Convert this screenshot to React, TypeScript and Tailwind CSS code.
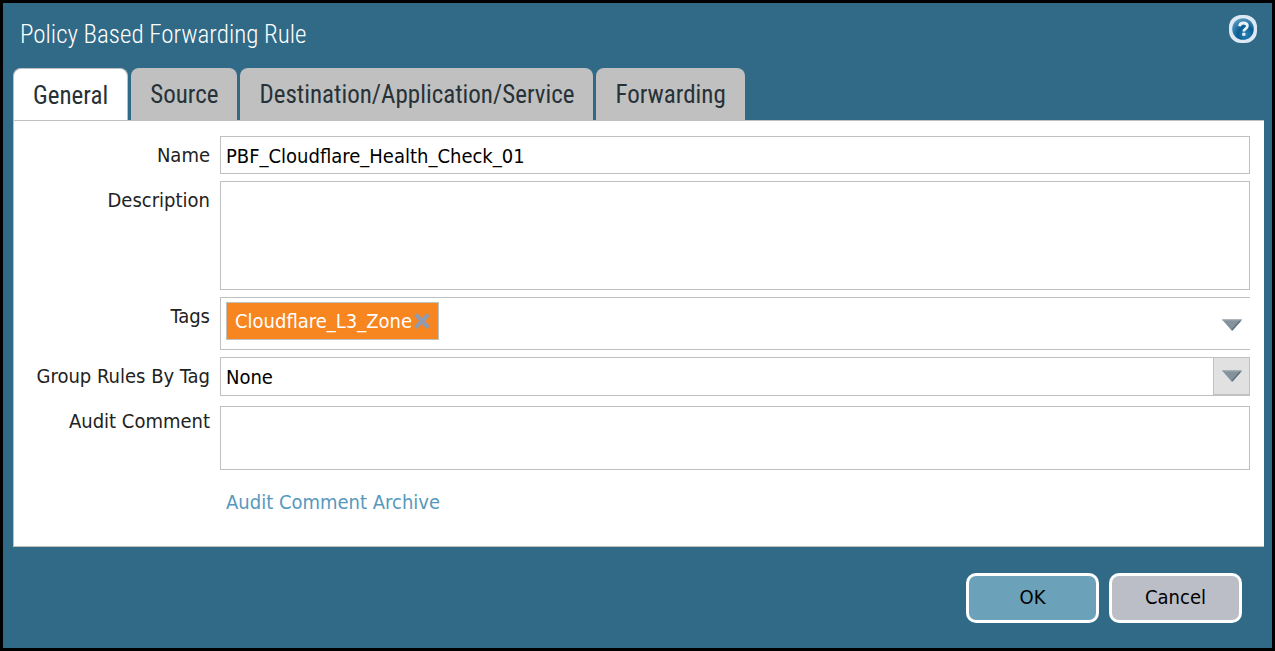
import type { ReactNode } from "react";

const tabs = ["General", "Source", "Destination/Application/Service", "Forwarding"];

function HelpIcon() {
  return (
    <svg viewBox="0 0 28 28" className="size-7" aria-hidden="true">
      <defs>
        <radialGradient id="help-fill" cx="0.62" cy="0.75" r="0.8">
          <stop offset="0" stopColor="#2a86b8" />
          <stop offset="0.45" stopColor="#0a5c92" />
          <stop offset="1" stopColor="#5b9cc2" />
        </radialGradient>
      </defs>
      <rect width="28" height="28" rx="12" fill="#dde8f4" />
      <circle cx="14" cy="14" r="10.8" fill="url(#help-fill)" />
      <path d="M10.5 11.200c.3-2.200 1.700-3.200 3.900-3.200 2.400 0 4 1.200 4 3.100 0 2.900-3.600 2.800-3.600 5.400" fill="none" stroke="#eaf2f8" strokeWidth="2.800" />
      <rect x="13.200" y="17.800" width="3.200" height="3" rx="0.600" fill="#eaf2f8" />
    </svg>
  );
}

function DownArrow() {
  return (
    <svg viewBox="0 0 20 12" className="h-3 w-5" aria-hidden="true">
      <path d="M0 .5h20L10 12z" fill="#84929b" />
      <path d="M18.500 1.500 10 11" stroke="#5f7381" strokeWidth="1.600" fill="none" />
      <path d="M0 1h20" stroke="#9ba7ae" strokeWidth="1" />
    </svg>
  );
}

function Row({ id, label, children, labelClass = "pt-[5px]" }: { id: string; label: string; children: ReactNode; labelClass?: string }) {
  return (
    <div className="flex gap-2.5">
      <label htmlFor={id} className={`w-[196px] shrink-0 text-right leading-7 text-[#222] ${labelClass}`}>
        {label}
      </label>
      {children}
    </div>
  );
}

export default function App() {
  return (
    <main className="flex min-h-screen flex-col border-[3px] border-black bg-[#306a87] pr-2 pl-2.5 font-['DejaVu_Sans_Condensed','Noto_Sans',sans-serif] text-[20px] text-black">
      <header className="flex h-[65px] items-start justify-between pt-3 pr-[7px] pl-[7px]">
        <h1 className="font-['Roboto_Condensed','Liberation_Sans',sans-serif] text-[25px] leading-10 font-light text-white">
          Policy Based Forwarding Rule
        </h1>
        <button type="button" aria-label="Help">
          <HelpIcon />
        </button>
      </header>

      <div role="tablist" className="flex gap-[3px] font-['Roboto_Condensed','Liberation_Sans',sans-serif] text-[25px] text-[#273238]">
        {tabs.map((tab, i) => (
          <button
            key={tab}
            type="button"
            role="tab"
            aria-selected={i === 0}
            className={
              i === 0
                ? "-mb-px h-[53px] rounded-t-lg border border-b-0 border-[#c0c0c0] bg-white px-[19px] pt-px"
                : "h-[52px] rounded-t-lg bg-[#c0c0c0] px-[19px] pt-0.5"
            }
          >
            {tab}
          </button>
        ))}
      </div>

      <form id="rule" className="flex flex-col gap-[7px] border border-r-0 border-[#c0c0c0] bg-white pt-[15px] pr-3.5 pb-7">
        <Row id="name" label="Name">
          <input id="name" defaultValue="PBF_Cloudflare_Health_Check_01" className="h-[38px] min-w-0 flex-1 border border-[#c0c0c0] px-[5px] pt-0.5" />
        </Row>
        <Row id="description" label="Description">
          <textarea id="description" className="h-[109px] min-w-0 flex-1 resize-none border border-[#c0c0c0] px-[5px]" />
        </Row>
        <Row id="tags" label="Tags">
          <div className="flex h-[53px] min-w-0 flex-1 items-start border border-r-0 border-[#c0c0c0] pt-1 pr-2 pl-[5px]">
            <span className="flex h-[38px] items-center border border-[#c0c0c0] bg-[#f78520] px-2 text-white">
              Cloudflare_L3_Zone
              <button type="button" aria-label="Remove tag" className="ml-0.5">
                <svg viewBox="0 0 16 16" className="size-4" aria-hidden="true">
                  <path d="M1.500 1.500l13 13M14.500 1.500l-13 13" stroke="#8f9bb3" strokeWidth="4" />
                </svg>
              </button>
            </span>
            <input id="tags" className="h-[38px] min-w-0 flex-1 px-1" />
            <button type="button" aria-label="Show tags" className="flex h-[46px] items-center">
              <DownArrow />
            </button>
          </div>
        </Row>
        <Row id="group" label="Group Rules By Tag">
          <div className="grid min-w-0 flex-1">
            <select id="group" className="col-start-1 row-start-1 h-[39px] appearance-none border border-[#c0c0c0] pr-10 pl-[5px]">
              <option>None</option>
            </select>
            <span className="pointer-events-none col-start-1 row-start-1 flex h-[38px] w-[37px] items-center justify-center justify-self-end border border-[#c0c0c0] bg-[#e1e1e1]">
              <DownArrow />
            </span>
          </div>
        </Row>
        <div className="pt-[3px]">
          <Row id="comment" label="Audit Comment" labelClass="pt-px">
            <textarea id="comment" className="h-16 min-w-0 flex-1 resize-none border border-[#c0c0c0] px-[5px]" />
          </Row>
        </div>
        <a href="#archive" className="mt-[9px] ml-[212px] self-start leading-8 text-[#5699bc]">
          Audit Comment Archive
        </a>
      </form>

      <footer className="flex justify-end gap-2.5 pt-[26px] pr-[22px]">
        <button type="submit" form="rule" className="h-[50px] w-[133px] rounded-[10px] border-[3px] border-white bg-[#6ba1b9] pb-0.5">
          OK
        </button>
        <button type="button" className="h-[50px] w-[133px] rounded-[10px] border-[3px] border-white bg-[#bbbdc7] pb-0.5">
          Cancel
        </button>
      </footer>
    </main>
  );
}
